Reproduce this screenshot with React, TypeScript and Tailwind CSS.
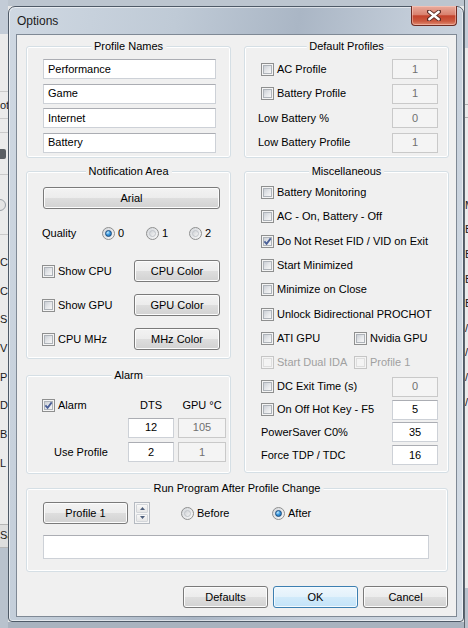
import type { ReactNode } from 'react'
import { clsx } from 'clsx'

/* ------------------------------------------------------------------ */
/*  Win7 style primitives                                              */
/* ------------------------------------------------------------------ */
function CheckBox({ checked = false, disabled = false }: { checked?: boolean; disabled?: boolean }) {
  return (
    <span
      className={clsx(
        'flex h-[13px] w-[13px] shrink-0 border bg-[#f4f4f4] p-[1px]',
        disabled ? 'border-[#c5c5c5]' : 'border-[#8e8f8f]',
      )}
    >
      <span
        className={clsx(
          'relative flex flex-1 border',
          disabled
            ? 'border-[#dedede] bg-[#f4f4f4]'
            : 'border-[#aeb3b9] bg-[linear-gradient(135deg,#cbcfd5_0%,#e4e6e9_50%,#f7f7f7_100%)]',
        )}
      >
        {checked && (
          <svg width="9" height="9" viewBox="0 0 9 9" className="absolute left-[-1px] top-[-1px]">
            <path d="M1.4 4.4 L3.6 6.9 L7.7 1.4" fill="none" stroke="#4a5f97" strokeWidth="1.8" />
          </svg>
        )}
      </span>
    </span>
  )
}

function Radio({ checked = false }: { checked?: boolean }) {
  return (
    <span className="flex h-[13px] w-[13px] shrink-0 items-center justify-center rounded-full border border-[#8e8f8f] bg-[linear-gradient(135deg,#d5d8dc,#f7f7f7)]">
      {checked ? (
        <span className="h-[7px] w-[7px] rounded-full border border-[#1b4a7c] bg-[radial-gradient(circle_at_35%_30%,#c4eaff_0%,#3d9be0_45%,#0b5ea6_100%)]" />
      ) : (
        <span className="h-[7px] w-[7px] rounded-full border border-[#c0c4c9] bg-[linear-gradient(135deg,#d0d3d7,#f4f4f4)]" />
      )}
    </span>
  )
}

function Field({
  value = '',
  className,
  disabled = false,
  center = false,
}: {
  value?: string
  className?: string
  disabled?: boolean
  center?: boolean
}) {
  return (
    <div
      className={clsx(
        'flex items-center border px-[4px]',
        center && 'justify-center',
        disabled
          ? 'border-[#c9c9c9] bg-[#f4f4f4] text-[#707070]'
          : 'border-[#cdd1d7] border-t-[#abadb3] bg-white text-black',
        className,
      )}
    >
      {value}
    </div>
  )
}

function WinButton({
  children,
  className,
  primary = false,
}: {
  children: ReactNode
  className?: string
  primary?: boolean
}) {
  return (
    <div
      className={clsx(
        'flex items-center justify-center rounded-[3px] border',
        primary
          ? 'border-[#3c7fb1] bg-[linear-gradient(to_bottom,#eef7fd_0%,#e2f1fb_50%,#d1eafa_50%,#c3e3f8_100%)] shadow-[inset_0_0_0_1px_#f4fafe]'
          : 'border-[#7a7a7a] bg-[linear-gradient(to_bottom,#f3f3f3_0%,#ececec_50%,#dedede_50%,#d2d2d2_100%)] shadow-[inset_0_0_0_1px_#fcfcfc]',
        className,
      )}
    >
      {children}
    </div>
  )
}

function Group({ title, className, children }: { title: string; className?: string; children: ReactNode }) {
  return (
    <div
      className={clsx(
        'relative shrink-0 rounded-[3px] border border-[#d5dfe5] shadow-[inset_0_0_0_1px_#ffffff]',
        className,
      )}
    >
      <span className="absolute left-1/2 top-[-7px] -translate-x-1/2 whitespace-nowrap bg-[#f0f0f0] px-[3px]">
        {title}
      </span>
      {children}
    </div>
  )
}

function Labeled({ children, disabled = false, checked = false, className }: {
  children: ReactNode
  disabled?: boolean
  checked?: boolean
  className?: string
}) {
  return (
    <span className={clsx('flex items-center gap-[3px] whitespace-nowrap', disabled && 'text-[#a0a0a0]', className)}>
      <CheckBox checked={checked} disabled={disabled} />
      {children}
    </span>
  )
}

function Spinner() {
  return (
    <div className="ml-[6px] flex h-[22px] w-[16px] shrink-0 flex-col gap-[1px] border border-[#b5bac1] bg-[#f6f6f6] p-[1px]">
      <div className="flex flex-1 items-center justify-center rounded-[1px] border border-[#d3d6da] bg-[linear-gradient(to_bottom,#f8f8f8,#e6e6e6)]">
        <svg width="5" height="3" viewBox="0 0 5 3">
          <path d="M0 3 L2.5 0 L5 3Z" fill="#4e5f7c" />
        </svg>
      </div>
      <div className="flex flex-1 items-center justify-center rounded-[1px] border border-[#d3d6da] bg-[linear-gradient(to_bottom,#f8f8f8,#e6e6e6)]">
        <svg width="5" height="3" viewBox="0 0 5 3">
          <path d="M0 0 L2.5 3 L5 0Z" fill="#4e5f7c" />
        </svg>
      </div>
    </div>
  )
}

function CloseButton() {
  return (
    <div className="-mt-[1px] flex h-[20px] w-[46px] items-center justify-center rounded-b-[4px] border border-t-0 border-[#6e2b22] bg-[linear-gradient(to_bottom,#e9ab9d_0%,#d9826f_45%,#c4432c_52%,#cb5a40_80%,#e18c73_100%)] shadow-[inset_0_0_0_1px_rgba(255,220,210,0.45)]">
      <svg width="14" height="11" viewBox="0 0 14 11">
        <path d="M2 1.5 L12 9.5 M12 1.5 L2 9.5" stroke="#5a2a24" strokeWidth="4.2" strokeLinecap="round" />
        <path d="M2.3 1.8 L11.7 9.2 M11.7 1.8 L2.3 9.2" stroke="#ffffff" strokeWidth="2.4" strokeLinecap="round" />
      </svg>
    </div>
  )
}

/* ------------------------------------------------------------------ */
/*  Group contents                                                     */
/* ------------------------------------------------------------------ */
const profileNames = ['Performance', 'Game', 'Internet', 'Battery']

function ProfileNames() {
  return (
    <Group title="Profile Names" className="h-[112px] pl-[16px] pt-[12px]">
      <div className="flex w-[173px] flex-col gap-[4.5px]">
        {profileNames.map((n) => (
          <Field key={n} value={n} className="h-[20px]" />
        ))}
      </div>
    </Group>
  )
}

function DefaultProfiles() {
  return (
    <Group title="Default Profiles" className="h-[112px] pr-[10px] pt-[12px]">
      <div className="flex flex-col gap-[4.5px]">
        <div className="flex h-[20px] items-center justify-between pl-[16px]">
          <Labeled>AC Profile</Labeled>
          <Field value="1" disabled center className="h-[20px] w-[46px]" />
        </div>
        <div className="flex h-[20px] items-center justify-between pl-[16px]">
          <Labeled>Battery Profile</Labeled>
          <Field value="1" disabled center className="h-[20px] w-[46px]" />
        </div>
        <div className="flex h-[20px] items-center justify-between pl-[13px]">
          <span>Low Battery %</span>
          <Field value="0" disabled center className="h-[20px] w-[46px]" />
        </div>
        <div className="flex h-[20px] items-center justify-between pl-[13px]">
          <span>Low Battery Profile</span>
          <Field value="1" disabled center className="h-[20px] w-[46px]" />
        </div>
      </div>
    </Group>
  )
}

const colorRows = [
  { label: 'Show CPU', button: 'CPU Color' },
  { label: 'Show GPU', button: 'GPU Color' },
  { label: 'CPU MHz', button: 'MHz Color' },
]

function NotificationArea() {
  return (
    <Group title="Notification Area" className="mt-[13px] h-[188px] pl-[15px] pr-[10px] pt-[15px]">
      <WinButton className="ml-[1px] h-[22px] w-[177px]">Arial</WinButton>
      <div className="mt-[16px] flex h-[16px] items-center">
        <span className="w-[60px]">Quality</span>
        <span className="flex w-[44px] items-center gap-[3px]">
          <Radio checked />0
        </span>
        <span className="flex w-[43px] items-center gap-[3px]">
          <Radio />1
        </span>
        <span className="flex items-center gap-[3px]">
          <Radio />2
        </span>
      </div>
      <div className="mt-[19px] flex flex-col gap-[12px]">
        {colorRows.map((r) => (
          <div key={r.label} className="flex h-[22px] items-center justify-between">
            <Labeled>{r.label}</Labeled>
            <WinButton className="h-[22px] w-[86px]">{r.button}</WinButton>
          </div>
        ))}
      </div>
    </Group>
  )
}

function Alarm() {
  return (
    <Group title="Alarm" className="mt-[16px] h-[99px] pt-[21px]">
      <div className="grid grid-cols-[97px_46px_48px] grid-rows-[16px_20px_20px] gap-x-[4px] gap-y-[4.5px]">
        <span className="flex items-center pl-[15px]">
          <Labeled checked>Alarm</Labeled>
        </span>
        <span className="flex items-center justify-center">DTS</span>
        <span className="flex items-center justify-center">GPU °C</span>
        <span />
        <Field value="12" center className="h-[20px]" />
        <Field value="105" disabled center className="h-[20px]" />
        <span className="flex items-center pl-[27px]">Use Profile</span>
        <Field value="2" center className="h-[20px]" />
        <Field value="1" disabled center className="h-[20px]" />
      </div>
    </Group>
  )
}

const miscChecks = [
  { label: 'Battery Monitoring' },
  { label: 'AC - On, Battery - Off' },
  { label: 'Do Not Reset FID / VID on Exit', checked: true },
  { label: 'Start Minimized' },
  { label: 'Minimize on Close' },
  { label: 'Unlock Bidirectional PROCHOT' },
]

function Miscellaneous() {
  return (
    <Group title="Miscellaneous" className="mt-[13px] h-[302px] pl-[16px] pr-[10px] pt-[8.5px]">
      {miscChecks.map((c) => (
        <div key={c.label} className="flex h-[24.3px] items-center">
          <Labeled checked={c.checked}>{c.label}</Labeled>
        </div>
      ))}
      <div className="flex h-[24.3px] items-center">
        <Labeled className="w-[93px]">ATI GPU</Labeled>
        <Labeled>Nvidia GPU</Labeled>
      </div>
      <div className="flex h-[24.3px] items-center">
        <Labeled disabled className="w-[93px]">Start Dual IDA</Labeled>
        <Labeled disabled>Profile 1</Labeled>
      </div>
      <div className="mt-[2.1px] flex flex-col gap-[2.7px]">
        <div className="flex h-[20px] items-center justify-between">
          <Labeled>DC Exit Time (s)</Labeled>
          <Field value="0" disabled center className="h-[20px] w-[46px]" />
        </div>
        <div className="flex h-[20px] items-center justify-between">
          <Labeled>On Off Hot Key - F5</Labeled>
          <Field value="5" center className="h-[20px] w-[46px]" />
        </div>
        <div className="flex h-[20px] items-center justify-between">
          <span>PowerSaver C0%</span>
          <Field value="35" center className="h-[20px] w-[46px]" />
        </div>
        <div className="flex h-[20px] items-center justify-between">
          <span>Force TDP / TDC</span>
          <Field value="16" center className="h-[20px] w-[46px]" />
        </div>
      </div>
    </Group>
  )
}

function RunProgram() {
  return (
    <Group title="Run Program After Profile Change" className="mt-[14px] h-[84px] w-[422px] pl-[16px] pt-[13px]">
      <div className="flex h-[22px] items-center">
        <WinButton className="h-[22px] w-[85px]">Profile 1</WinButton>
        <Spinner />
        <span className="ml-[31px] flex w-[91px] items-center gap-[3px]">
          <Radio />
          Before
        </span>
        <span className="flex items-center gap-[3px]">
          <Radio checked />
          After
        </span>
      </div>
      <Field className="mt-[11px] h-[24px] w-[386px]" />
    </Group>
  )
}

/* ------------------------------------------------------------------ */
/*  Screen around the dialog                                           */
/* ------------------------------------------------------------------ */
const leftLetters = ['C', 'C', 'S', 'V', 'P', 'D', 'B', 'L']
const rightMarks = ['B', 'B', 'B', 'B', '/', '/', '/', '/']

function LeftStrip() {
  return (
    <div className="flex w-[8px] shrink-0 flex-col overflow-hidden bg-[#ebebeb] text-[#1a1a1a]">
      <div className="h-[34px] shrink-0 bg-[#c3ccd7]" />
      <div className="h-[58px] shrink-0 border-b border-[#cacaca]" />
      <div className="flex h-[27px] shrink-0 items-center whitespace-nowrap border-b border-[#cacaca]">
        <span className="-ml-[8px]">Hot</span>
      </div>
      <div className="h-[14px] shrink-0 border-b border-[#cacaca]" />
      <div className="flex h-[42px] shrink-0 items-center border-b border-[#cacaca]">
        <span className="h-[10px] w-[6px] rounded-r-[2px] bg-[#5b5f64]" />
      </div>
      <div className="flex h-[60px] shrink-0 items-center border-b border-[#cacaca]">
        <span className="-ml-[6px] h-[12px] w-[12px] rounded-full border border-[#9aa0a6] bg-[#e4e4e4]" />
      </div>
      <div className="h-[13px] shrink-0" />
      {leftLetters.map((l, i) => (
        <div key={i} className="flex h-[28.7px] shrink-0 items-center">
          {l}
        </div>
      ))}
      <div className="h-[47px] shrink-0 border-b border-[#b5b5b5]" />
      <div className="flex h-[23px] shrink-0 items-center whitespace-nowrap border-b border-[#b5b5b5] bg-[#dedede]">
        Sa
      </div>
      <div className="flex-1 bg-[#b9c2cd]" />
    </div>
  )
}

function RightStrip() {
  return (
    <div className="flex w-[4px] shrink-0 flex-col overflow-hidden border-l border-[#5f666e] bg-[#ebebeb] text-[#1a1a1a]">
      <div className="h-[48px] shrink-0 bg-[#c3ccd7]" />
      <div className="h-[57px] shrink-0 border-b border-[#b0b0b0]" />
      <div className="h-[13px] shrink-0 border-b border-[#b0b0b0]" />
      <div className="h-[75px] shrink-0" />
      <div className="flex h-[24.6px] shrink-0 items-center">M</div>
      {rightMarks.map((m, i) => (
        <div key={i} className="flex h-[24.6px] shrink-0 items-center">
          {m}
        </div>
      ))}
      <div className="flex-1" />
      <div className="h-[40px] shrink-0 bg-[#b9c2cd]" />
    </div>
  )
}

/* ------------------------------------------------------------------ */
/*  Dialog                                                             */
/* ------------------------------------------------------------------ */
export default function App() {
  return (
    <div className="flex h-[628px] w-[468px] overflow-hidden bg-[#e9e9e9] font-['Liberation_Sans',Arial,sans-serif] text-[11px] leading-[13px] text-black">
      <LeftStrip />
      <div className="flex w-[456px] shrink-0 flex-col">
        <div className="h-[6px] shrink-0 bg-[#bcc5cf]" />
        <div className="flex h-[616px] shrink-0 flex-col rounded-t-[7px] rounded-b-[4px] border border-[#4f5a67] bg-[linear-gradient(100deg,#cfd8e2_0%,#bfcad6_30%,#aab6c5_52%,#c2ccd8_72%,#d4dce5_100%)] pb-[4px] pl-[7px] pr-[6px] shadow-[inset_0_0_0_1px_rgba(255,255,255,0.55)]">
          <div className="flex h-[27px] shrink-0 items-start justify-between">
            <span className="pl-[1px] pt-[7px] text-[12px] leading-[14px] text-[#1a1a1a]">Options</span>
            <CloseButton />
          </div>
          <div className="flex h-[583px] shrink-0 flex-col border border-[#7f8995] bg-[#f0f0f0] pl-[9px] pr-[7px] pt-[11px]">
            <div className="flex gap-[13px]">
              <div className="flex w-[205px] flex-col">
                <ProfileNames />
                <NotificationArea />
                <Alarm />
              </div>
              <div className="flex w-[205px] flex-col">
                <DefaultProfiles />
                <Miscellaneous />
              </div>
            </div>
            <RunProgram />
            <div className="mt-[14px] flex justify-end gap-[5px] pr-[1px]">
              <WinButton className="h-[22px] w-[85px]">Defaults</WinButton>
              <WinButton primary className="h-[22px] w-[85px]">
                OK
              </WinButton>
              <WinButton className="h-[22px] w-[85px]">Cancel</WinButton>
            </div>
          </div>
        </div>
        <div className="flex-1 bg-[#a9b3bf]" />
      </div>
      <RightStrip />
    </div>
  )
}
